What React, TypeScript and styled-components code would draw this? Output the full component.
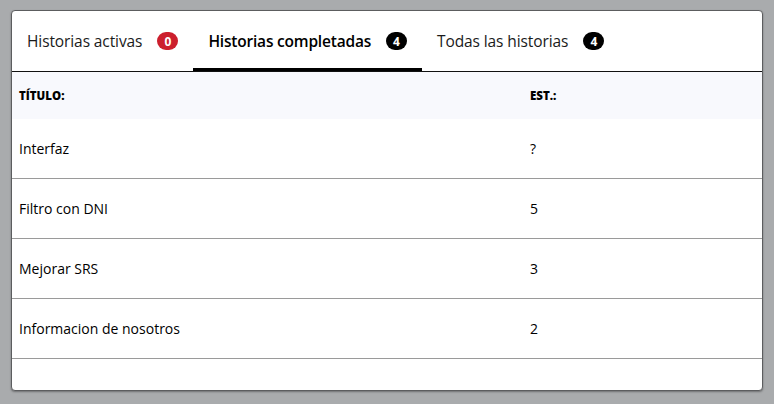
import React from "react";
import styled, { createGlobalStyle } from "styled-components";

const Global = createGlobalStyle`
  html, body { margin: 0; padding: 0; background: #a9abad; }
  body { font-family: "Open Sans", "Noto Sans", sans-serif; }
  * { box-sizing: border-box; }
`;

const Page = styled.div`
  padding: 10px 11px 13px 11px;
`;

const Card = styled.div`
  height: 381px;
  background: #fff;
  border: 1px solid #5c5d5f;
  border-radius: 4px;
  box-shadow: 0 1px 2px rgba(0, 0, 0, 0.35);
  overflow: hidden;
  display: flex;
  flex-direction: column;
`;

const Tabs = styled.div`
  display: flex;
  height: 61px;
  border-bottom: 1px solid #111;
`;

const Tab = styled.div<{ $active?: boolean }>`
  display: flex;
  align-items: center;
  gap: 15px;
  padding: 0 15px;
  height: 60px;
  font-size: 15.5px;
  letter-spacing: ${(p) => (p.$active ? "-0.2px" : "-0.1px")};
  color: ${(p) => (p.$active ? "#000" : "#1a1a1a")};
  font-weight: ${(p) => (p.$active ? 600 : 400)};
  border-bottom: 3px solid ${(p) => (p.$active ? "#000" : "transparent")};
  padding-top: 3px;
`;

const Badge = styled.span<{ $red?: boolean }>`
  display: inline-flex;
  align-items: center;
  justify-content: center;
  min-width: 21px;
  height: 18px;
  padding: 0 6px;
  border-radius: 9px;
  background: ${(p) => (p.$red ? "#cc1f2d" : "#000")};
  color: #fff;
  font-size: 12px;
  font-weight: 700;
  letter-spacing: 0;
`;

const HeaderRow = styled.div`
  display: grid;
  grid-template-columns: 511px 1fr;
  height: 47px;
  align-items: center;
  background: #f8f9fd;
  font-size: 11.5px;
  font-weight: 800;
  color: #000;
  padding-left: 7px;
`;

const Row = styled.div`
  display: grid;
  grid-template-columns: 511px 1fr;
  height: 60px;
  align-items: center;
  border-bottom: 1px solid #9a9a9a;
  font-size: 14px;
  color: #000;
  padding-left: 7px;
`;

const Cell = styled.div``;

const rows = [
  { t: "Interfaz", e: "?" },
  { t: "Filtro con DNI", e: "5" },
  { t: "Mejorar SRS", e: "3" },
  { t: "Informacion de nosotros", e: "2" },
];

export default function App() {
  return (
    <>
      <Global />
      <Page>
        <Card>
          <Tabs>
            <Tab>
              Historias activas <Badge $red>0</Badge>
            </Tab>
            <Tab $active>
              Historias completadas <Badge>4</Badge>
            </Tab>
            <Tab>
              Todas las historias <Badge>4</Badge>
            </Tab>
          </Tabs>
          <HeaderRow>
            <Cell>TÍTULO:</Cell>
            <Cell>EST.:</Cell>
          </HeaderRow>
          {rows.map((r) => (
            <Row key={r.t}>
              <Cell>{r.t}</Cell>
              <Cell>{r.e}</Cell>
            </Row>
          ))}
        </Card>
      </Page>
    </>
  );
}
